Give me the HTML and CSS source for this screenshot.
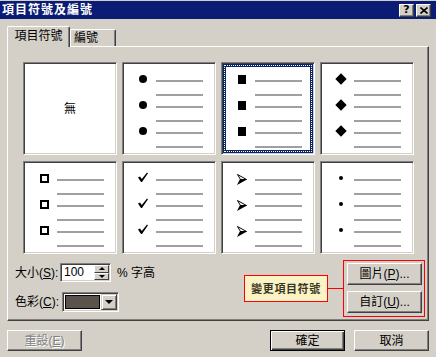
FILE: index.html
```html
<!DOCTYPE html>
<html lang="zh-Hant">
<head>
  <meta charset="UTF-8">
  <title>項目符號及編號</title>
  <link rel="stylesheet" href="styles.css">
</head>
<body>
  <div class="dialog">
    <!-- Title bar -->
    <div class="titlebar">
      <span class="title">項目符號及編號</span>
      <div class="title-btns">
        <span class="tbtn help">?</span>
        <span class="tbtn">
          <svg width="8" height="7" viewBox="0 0 8 7"><path d="M0.5 0.5 L7.5 6.5 M7.5 0.5 L0.5 6.5" stroke="#000" stroke-width="1.6" fill="none"/></svg>
        </span>
      </div>
    </div>

    <!-- Tabs -->
    <div class="tabs">
      <div class="tab active">項目符號</div>
      <div class="tab">編號</div>
    </div>

    <div class="panel">
      <div class="grid">
        <div class="thumb none">無</div>

        <div class="thumb">
          <div class="item"><span class="mark"><i class="disc"></i></span><span class="lines"></span></div>
          <div class="item"><span class="mark"><i class="disc"></i></span><span class="lines"></span></div>
          <div class="item"><span class="mark"><i class="disc"></i></span><span class="lines"></span></div>
        </div>

        <div class="thumb selected">
          <div class="item"><span class="mark"><i class="square"></i></span><span class="lines"></span></div>
          <div class="item"><span class="mark"><i class="square"></i></span><span class="lines"></span></div>
          <div class="item"><span class="mark"><i class="square"></i></span><span class="lines"></span></div>
        </div>

        <div class="thumb">
          <div class="item"><span class="mark"><i class="diamond"></i></span><span class="lines"></span></div>
          <div class="item"><span class="mark"><i class="diamond"></i></span><span class="lines"></span></div>
          <div class="item"><span class="mark"><i class="diamond"></i></span><span class="lines"></span></div>
        </div>

        <div class="thumb">
          <div class="item"><span class="mark"><i class="box"></i></span><span class="lines"></span></div>
          <div class="item"><span class="mark"><i class="box"></i></span><span class="lines"></span></div>
          <div class="item"><span class="mark"><i class="box"></i></span><span class="lines"></span></div>
        </div>

        <div class="thumb">
          <div class="item"><span class="mark"><svg class="glyph" width="10" height="10" viewBox="0 0 10 10"><polygon points="0,5.5 2,4.5 3.8,7 9,0.5 10,1.2 4,10 3,10" fill="#000"/></svg></span><span class="lines"></span></div>
          <div class="item"><span class="mark"><svg class="glyph" width="10" height="10" viewBox="0 0 10 10"><polygon points="0,5.5 2,4.5 3.8,7 9,0.5 10,1.2 4,10 3,10" fill="#000"/></svg></span><span class="lines"></span></div>
          <div class="item"><span class="mark"><svg class="glyph" width="10" height="10" viewBox="0 0 10 10"><polygon points="0,5.5 2,4.5 3.8,7 9,0.5 10,1.2 4,10 3,10" fill="#000"/></svg></span><span class="lines"></span></div>
        </div>

        <div class="thumb">
          <div class="item"><span class="mark"><svg class="arrow" width="10" height="11" viewBox="0 0 10 11"><polygon points="0.5,0.5 9.5,5.5 3.5,5.5" fill="#fff" stroke="#000" stroke-width="1"/><polygon points="3,5 10,5.5 0,11" fill="#000"/></svg></span><span class="lines"></span></div>
          <div class="item"><span class="mark"><svg class="arrow" width="10" height="11" viewBox="0 0 10 11"><polygon points="0.5,0.5 9.5,5.5 3.5,5.5" fill="#fff" stroke="#000" stroke-width="1"/><polygon points="3,5 10,5.5 0,11" fill="#000"/></svg></span><span class="lines"></span></div>
          <div class="item"><span class="mark"><svg class="arrow" width="10" height="11" viewBox="0 0 10 11"><polygon points="0.5,0.5 9.5,5.5 3.5,5.5" fill="#fff" stroke="#000" stroke-width="1"/><polygon points="3,5 10,5.5 0,11" fill="#000"/></svg></span><span class="lines"></span></div>
        </div>

        <div class="thumb">
          <div class="item"><span class="mark"><i class="dot"></i></span><span class="lines"></span></div>
          <div class="item"><span class="mark"><i class="dot"></i></span><span class="lines"></span></div>
          <div class="item"><span class="mark"><i class="dot"></i></span><span class="lines"></span></div>
        </div>
      </div>

      <div class="options">
        <div class="fields">
          <div class="field">
            <label class="size-label">大小(<u>S</u>):</label>
            <div class="spin">
              <span class="spin-value">100</span>
              <div class="spin-btns">
                <span class="spin-btn"><i class="tri-up"></i></span>
                <span class="spin-btn"><i class="tri-down"></i></span>
              </div>
            </div>
            <span class="unit">% 字高</span>
          </div>
          <div class="field">
            <label class="color-label">色彩(<u>C</u>):</label>
            <div class="color-pick">
              <div class="swatch-wrap"><span class="swatch"></span></div>
              <span class="drop-btn"><i class="tri-down"></i></span>
            </div>
          </div>
        </div>

        <div class="callout">
          <div class="tip">變更項目符號</div>
          <div class="connector"></div>
          <div class="redbox">
            <button class="btn">圖片(<u>P</u>)...</button>
            <button class="btn">自訂(<u>U</u>)...</button>
          </div>
        </div>
      </div>
    </div>

    <div class="footer">
      <button class="btn disabled">重設(<u>E</u>)</button>
      <button class="btn default">確定</button>
      <button class="btn">取消</button>
    </div>
  </div>
</body>
</html>
```

FILE: styles.css
```css
/* Global */
body {
  margin: 0;
  width: 436px;
  height: 357px;
  overflow: hidden;
  background-color: #d4d0c8;
  font-family: "Liberation Sans", "Noto Sans CJK TC", sans-serif;
  font-size: 12px;
  line-height: 14px;
  color: #000;
}

.dialog {
  padding-top: 1px;
}

/* Title bar */
.titlebar {
  height: 18px;
  background-color: #0a1c74;
  display: flex;
  align-items: center;
  justify-content: space-between;
  padding-left: 2px;
  padding-right: 5px;
}

.title {
  color: #fff;
  font-weight: bold;
  letter-spacing: 1px;
}

.title-btns {
  display: flex;
  gap: 2px;
}

.tbtn {
  width: 15px;
  height: 13px;
  box-sizing: border-box;
  background-color: #d4d0c8;
  border: 1px solid;
  border-color: #fff #404040 #404040 #fff;
  box-shadow: inset -1px -1px #808080;
  display: flex;
  align-items: center;
  justify-content: center;
}

.help {
  font-weight: bold;
  font-size: 11px;
  font-family: "DejaVu Sans", sans-serif;
}

/* Tabs */
.tabs {
  display: flex;
  align-items: flex-end;
  height: 20px;
  margin-top: 7px;
  padding-left: 7px;
}

.tab {
  box-sizing: border-box;
  height: 17px;
  width: 46px;
  padding-left: 3px;
  border: 1px solid;
  border-bottom: none;
  border-color: #fff #404040 #fff #fff;
  box-shadow: inset -1px 0 #808080;
  border-radius: 2px 2px 0 0;
  line-height: 16px;
}

.tab.active {
  position: relative;
  z-index: 1;
  width: 63px;
  height: 21px;
  margin-bottom: -1px;
  padding-left: 0;
  text-align: center;
  line-height: 19px;
  background-color: #d4d0c8;
}

/* Tab panel */
.panel {
  margin: 0 7px;
  padding: 15px 0 3px;
  border: 1px solid;
  border-color: #fff #404040 #404040 #fff;
  box-shadow: inset -1px -1px #808080;
}

.grid {
  display: grid;
  grid-template-columns: repeat(4, 94px);
  grid-auto-rows: 93px;
  column-gap: 5px;
  row-gap: 6px;
  padding-left: 15px;
}

.thumb {
  box-sizing: border-box;
  background-color: #fff;
  border: 1px solid;
  border-color: #808080 #fff #fff #808080;
  box-shadow: inset 1px 1px #404040, inset -1px -1px #d4d0c8;
  padding: 17px 0 0 11px;
  display: flex;
  flex-direction: column;
  gap: 10px;
}

.thumb.none {
  padding: 0;
  align-items: center;
  justify-content: center;
}

.thumb.selected {
  box-shadow: inset 1px 1px #404040, inset -1px -1px #d4d0c8, inset 0 0 0 4px #0a246a;
  outline: 1px dotted #fff;
  outline-offset: -4px;
}

.item {
  display: flex;
  align-items: flex-start;
}

.mark {
  width: 18px;
  height: 2px;
  margin-right: 4px;
  display: flex;
  align-items: center;
  justify-content: center;
}

.lines {
  width: 47px;
  height: 12px;
  border-top: 2px solid #a0a0a0;
  border-bottom: 2px solid #a0a0a0;
}

.disc {
  width: 8px;
  height: 8px;
  border-radius: 50%;
  background-color: #000;
  margin-bottom: 4px;
  flex-shrink: 0;
}

.square {
  width: 8px;
  height: 9px;
  background-color: #000;
  margin-bottom: 4px;
  flex-shrink: 0;
}

.diamond {
  width: 8px;
  height: 8px;
  background-color: #000;
  transform: rotate(45deg);
  margin-bottom: 4px;
  flex-shrink: 0;
}

.box {
  box-sizing: border-box;
  width: 9px;
  height: 9px;
  border: 2px solid #000;
  margin-bottom: 3px;
  flex-shrink: 0;
}

.glyph {
  flex-shrink: 0;
  margin-bottom: 6px;
}

.arrow {
  flex-shrink: 0;
  margin-bottom: 2px;
}

.dot {
  width: 4px;
  height: 4px;
  border-radius: 50%;
  background-color: #000;
  margin-bottom: 4px;
  flex-shrink: 0;
}

/* Options under the grid */
.options {
  display: flex;
  justify-content: space-between;
  align-items: flex-start;
  margin-top: 6px;
  padding: 0 3px 0 7px;
}

.fields {
  display: flex;
  flex-direction: column;
  gap: 10px;
  padding-top: 3px;
}

.field {
  display: flex;
  align-items: center;
}

.size-label {
  width: 45px;
}

.color-label {
  width: 47px;
}

.spin {
  box-sizing: border-box;
  width: 51px;
  height: 19px;
  display: flex;
  background-color: #fff;
  border: 1px solid;
  border-color: #808080 #fff #fff #808080;
  box-shadow: inset 1px 1px #404040, inset -1px -1px #d4d0c8;
  padding: 1px;
}

.spin-value {
  flex: 1;
  padding-left: 2px;
  line-height: 15px;
}

.spin-btns {
  display: flex;
  flex-direction: column;
  width: 15px;
}

.spin-btn {
  flex: 1;
  box-sizing: border-box;
  background-color: #d4d0c8;
  border: 1px solid;
  border-color: #fff #404040 #404040 #fff;
  display: flex;
  align-items: center;
  justify-content: center;
}

.tri-up,
.tri-down {
  width: 0;
  height: 0;
  border-left: 3px solid transparent;
  border-right: 3px solid transparent;
}

.tri-up {
  border-bottom: 3px solid #000;
}

.tri-down {
  border-top: 3px solid #000;
}

.unit {
  margin-left: 6px;
}

.color-pick {
  box-sizing: border-box;
  width: 57px;
  height: 20px;
  display: flex;
  background-color: #fff;
  border: 1px solid;
  border-color: #808080 #fff #fff #808080;
  box-shadow: inset 1px 1px #404040, inset -1px -1px #d4d0c8;
  padding: 1px;
}

.swatch-wrap {
  flex: 1;
  padding: 1px;
  display: flex;
}

.swatch {
  flex: 1;
  background-color: #5b534b;
  border: 1px dotted #fff;
  outline: 1px solid #000;
  outline-offset: -1px;
  border-color: #fff;
}

.drop-btn {
  box-sizing: border-box;
  width: 16px;
  background-color: #d4d0c8;
  border: 1px solid;
  border-color: #d4d0c8 #404040 #404040 #d4d0c8;
  box-shadow: inset 1px 1px #fff, inset -1px -1px #808080;
  display: flex;
  align-items: center;
  justify-content: center;
}

.drop-btn .tri-down {
  border-left-width: 4px;
  border-right-width: 4px;
  border-top-width: 4px;
}

/* Callout */
.callout {
  display: flex;
  align-items: center;
}

.tip {
  box-sizing: border-box;
  width: 84px;
  height: 27px;
  border: 1px solid #f00;
  background-color: #faf3c6;
  color: #3a3422;
  font-weight: bold;
  font-size: 11px;
  letter-spacing: 0.6px;
  display: flex;
  align-items: center;
  justify-content: center;
}

.connector {
  width: 15px;
  height: 1px;
  background-color: #f00;
}

.redbox {
  border: 1px solid #f00;
  padding: 2px 2px 3px 3px;
  display: flex;
  flex-direction: column;
  gap: 6px;
}

/* Buttons */
.btn {
  box-sizing: border-box;
  width: 75px;
  height: 22px;
  margin: 0;
  padding: 0;
  font: inherit;
  color: #000;
  background-color: #d4d0c8;
  border: 1px solid;
  border-color: #fff #404040 #404040 #fff;
  box-shadow: inset -1px -1px #808080;
}

.footer {
  display: flex;
  margin-top: 9px;
  padding: 0 7px;
  gap: 9px;
}

.footer .btn {
  height: 21px;
}

.btn.default {
  margin-left: auto;
  border: 1px solid #000;
  box-shadow: inset 1px 1px #fff, inset -1px -1px #404040, inset -2px -2px #808080;
}

.btn.disabled {
  color: #808080;
  text-shadow: 1px 1px #fff;
}
```
